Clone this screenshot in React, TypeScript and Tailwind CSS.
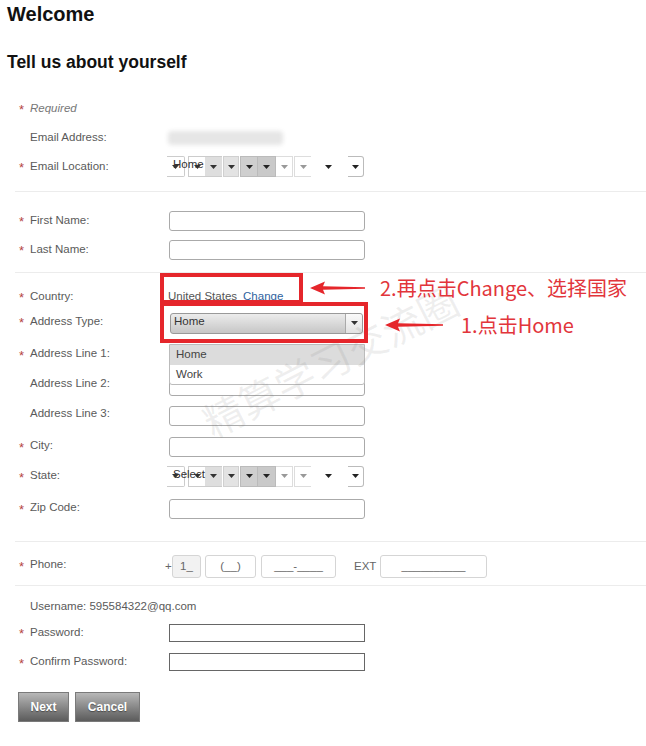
import React from "react";

const Tri = ({ color = "#333" }: { color?: string }) => (
  <svg width="7" height="4" viewBox="0 0 7 4">
    <polygon points="0,0 7,0 3.5,4" fill={color} />
  </svg>
);

const Row = ({
  label,
  req,
  cls,
  children,
}: {
  label?: string;
  req?: boolean;
  cls: string;
  children?: React.ReactNode;
}) => (
  <div className={`flex items-center pl-[19px] ${cls}`}>
    <span className="w-[11px] text-[13px] leading-none text-[#b5453f] pt-[2px]">{req ? "*" : ""}</span>
    <span className="w-[138px] text-[11.5px] text-[#5a5a5a]">{label}</span>
    <div className="flex items-center">{children}</div>
  </div>
);

const Input = ({ dark }: { dark?: boolean }) =>
  dark ? (
    <div className="ml-[1px] w-[196px] h-[18px] border border-[#666] bg-white" />
  ) : (
    <div className="ml-[1px] w-[196px] h-[20px] border border-[#aaa] rounded-[3px] bg-white" />
  );

const segs: { w: number; ml: number; cls: string; arrow?: string }[] = [
  { w: 18, ml: 0, cls: "bg-white border-y border-r border-[#ccc] rounded-r-[2px]", arrow: "#333" },
  { w: 17, ml: 3, cls: "bg-white border-y border-l border-[#ccc]", arrow: "#333" },
  { w: 17, ml: 0, cls: "bg-[#dedede] border-y border-[#ccc]", arrow: "#333" },
  { w: 16, ml: 1, cls: "bg-[#e3e3e3] border border-[#d0d0d0]", arrow: "#333" },
  { w: 18, ml: 1, cls: "bg-[#cfcfcf] border border-[#bbb]", arrow: "#222" },
  { w: 18, ml: 0, cls: "bg-[#c9c9c9] border-y border-r border-[#bbb]", arrow: "#222" },
  { w: 17, ml: 0, cls: "bg-white border-y border-r border-[#ddd]", arrow: "#999" },
  { w: 17, ml: 1, cls: "bg-white border-y border-l border-[#ddd]", arrow: "#999" },
  { w: 35, ml: 0, cls: "bg-white", arrow: "#222" },
  { w: 16, ml: 2, cls: "bg-white border-y border-r border-[#bbb] rounded-r-[3px]", arrow: "#222" },
];

const SegSelect = ({ text }: { text: string }) => (
  <div className="relative -ml-[1px] flex h-[21px]">
    {segs.map((s, i) => (
      <div
        key={i}
        style={{ width: s.w, marginLeft: s.ml }}
        className={`h-full flex items-center justify-center ${s.cls}`}
      >
        {s.arrow && <Tri color={s.arrow} />}
      </div>
    ))}
    <span className="absolute left-[6px] top-[0px] text-[11.5px] text-[#333]">{text}</span>
  </div>
);

const Divider = ({ cls }: { cls: string }) => (
  <div className={`ml-[15px] h-px bg-[#ececec] ${cls}`} />
);

const PhoneBox = ({ w, text, gray }: { w: string; text: string; gray?: boolean }) => (
  <div
    className={`${w} h-[23px] border border-[#d5d5d5] rounded-[3px] flex items-center justify-center text-[11.5px] text-[#666] ${
      gray ? "bg-[#f2f2f2]" : "bg-white"
    }`}
  >
    {text}
  </div>
);

const Arrow = ({ w }: { w: number }) => (
  <svg width={w} height="14" viewBox={`0 0 ${w} 14`}>
    <polygon
      points={`0,7 15,0.5 13,5.2 ${w},6.3 ${w},7.7 13,8.8 15,13.5`}
      fill="#e5262b"
    />
  </svg>
);

export default function App() {
  return (
    <div
      className="relative w-[646px] h-[746px] bg-white overflow-hidden"
      style={{ fontFamily: '"Liberation Sans", Arial, sans-serif' }}
    >
      <h1 className="mt-[2px] pl-[7px] h-[24px] leading-[24px] text-[20px] font-bold text-[#111]">
        Welcome
      </h1>
      <h2 className="mt-[26px] pl-[7px] h-[21px] leading-[21px] text-[17.5px] font-bold text-[#111]">
        Tell us about yourself
      </h2>

      <div className="mt-[21px]">
        <Row req cls="h-[29px]">
          <span className="-ml-[138px] text-[11.5px] italic text-[#777]">Required</span>
        </Row>
        <Row label="Email Address:" cls="h-[29px]">
          <div className="w-[115px] h-[14px] rounded-[4px] bg-[#e6e6e6] blur-[2px]" />
        </Row>
        <Row req label="Email Location:" cls="h-[29px]">
          <SegSelect text="Home" />
        </Row>
        <Divider cls="mt-[10px]" />

        <Row req label="First Name:" cls="mt-[14px] h-[29px]">
          <Input />
        </Row>
        <Row req label="Last Name:" cls="h-[29px]">
          <Input />
        </Row>
        <Divider cls="mt-[8px]" />

        <Row req label="Country:" cls="mt-[11px] h-[25px]">
          <span className="text-[11.5px] text-[#555]">United States</span>
          <span className="ml-[6px] text-[11.5px] text-[#2f63a0]">Change</span>
        </Row>
        <Row req label="Address Type:" cls="h-[25px]">
          <div className="ml-[2px] mt-[3px] w-[193px] h-[21px] border border-[#999] rounded-[3px] bg-linear-to-b from-[#ececec] to-[#c6c6c6] flex">
            <span className="flex-1 pl-[3px] text-[11.5px] leading-[14px] text-[#333]">Home</span>
            <div className="w-[17px] h-full border-l border-[#aaa] bg-linear-to-b from-[#fafafa] to-[#e2e2e2] rounded-r-[3px] flex items-center justify-center">
              <Tri color="#333" />
            </div>
          </div>
        </Row>
        <Row req label="Address Line 1:" cls="mt-[5px] h-[30px]">
          <Input />
        </Row>
        <Row label="Address Line 2:" cls="h-[30px]">
          <div className="mt-[4px]">
            <Input />
          </div>
        </Row>
        <Row label="Address Line 3:" cls="h-[30px]">
          <div className="mt-[4px]">
            <Input />
          </div>
        </Row>
        <Row req label="City:" cls="mt-[2px] h-[30px]">
          <div className="mt-[2px]">
            <Input />
          </div>
        </Row>
        <Row req label="State:" cls="h-[30px]">
          <SegSelect text="Select" />
        </Row>
        <Row req label="Zip Code:" cls="mt-[2px] h-[30px]">
          <div className="mt-[2px]">
            <Input />
          </div>
        </Row>
        <Divider cls="mt-[18px]" />

        <Row req label="Phone:" cls="mt-[8px] h-[30px]">
          <div className="-ml-[3px] mt-[3px] flex items-center text-[11.5px] text-[#666]">
            <span className="w-[7px]">+</span>
            <PhoneBox w="w-[29px]" text="1_" gray />
            <div className="ml-[4px]">
              <PhoneBox w="w-[51px]" text="(__)" />
            </div>
            <div className="ml-[5px]">
              <PhoneBox w="w-[75px]" text="___-____" />
            </div>
            <span className="ml-[18px] w-[26px]">EXT</span>
            <PhoneBox w="w-[107px]" text="__________" />
          </div>
        </Row>
        <Divider cls="mt-[5px]" />

        <div className="mt-[8px] h-[26px] pl-[30px] flex items-center text-[11.5px] text-[#5a5a5a]">
          Username: 595584322@qq.com
        </div>
        <Row req label="Password:" cls="h-[25px]">
          <Input dark />
        </Row>
        <Row req label="Confirm Password:" cls="mt-[2px] h-[30px]">
          <Input dark />
        </Row>

        <div className="mt-[15px] pl-[18px] flex gap-[6px]">
          <button className="w-[51px] h-[30px] border border-[#7a7a7a] bg-linear-to-b from-[#b8b8b8] to-[#5c5c5c] text-white text-[12px] font-bold [text-shadow:0_1px_1px_rgba(0,0,0,0.4)]">
            Next
          </button>
          <button className="w-[65px] h-[30px] border border-[#7a7a7a] bg-linear-to-b from-[#b8b8b8] to-[#5c5c5c] text-white text-[12px] font-bold [text-shadow:0_1px_1px_rgba(0,0,0,0.4)]">
            Cancel
          </button>
        </div>
      </div>

      {/* open dropdown list */}
      <div className="absolute left-[169px] top-[344px] w-[196px] h-[41px] bg-white border border-[#bbb] rounded-b-[3px] text-[11.5px] text-[#444]">
        <div className="h-[20px] bg-[#dcdcdc] pl-[6px] flex items-center">Home</div>
        <div className="h-[20px] pl-[6px] flex items-center">Work</div>
      </div>

      {/* watermark */}
      <div
        className="absolute left-[190px] top-[338px] w-[280px] text-center text-[40px] leading-[44px] text-[rgba(120,120,120,0.12)] rotate-[-27deg] pointer-events-none"
        style={{ fontFamily: '"Noto Sans CJK SC", sans-serif' }}
      >
        精算学习交流圈
      </div>

      {/* annotation boxes */}
      <div className="absolute left-[160px] top-[273px] w-[143px] h-[31px] border-[4px] border-[#e5262b]" />
      <div className="absolute left-[160px] top-[302px] w-[208px] h-[41px] border-[4px] border-[#e5262b]" />

      <div className="absolute left-[310px] top-[281px]">
        <Arrow w={55} />
      </div>
      <div className="absolute left-[385px] top-[318px]">
        <Arrow w={58} />
      </div>

      <div
        className="absolute left-[380px] top-[274px] h-[28px] leading-[28px] text-[20px] text-[#e2353b]"
        style={{ fontFamily: '"Noto Sans CJK SC", sans-serif' }}
      >
        2.再点击Change、选择国家
      </div>
      <div
        className="absolute left-[461px] top-[311px] h-[28px] leading-[28px] text-[20px] text-[#e2353b]"
        style={{ fontFamily: '"Noto Sans CJK SC", sans-serif' }}
      >
        1.点击Home
      </div>
    </div>
  );
}
